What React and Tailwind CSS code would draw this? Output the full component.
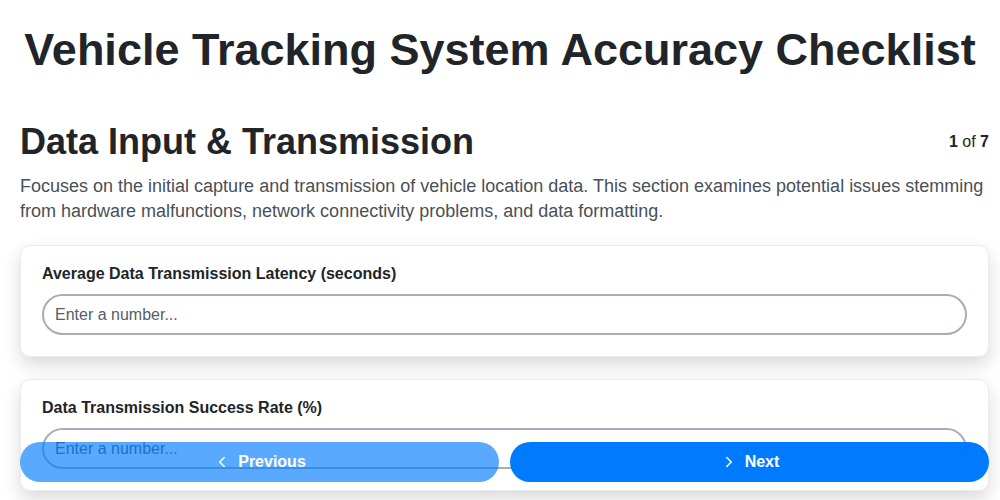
import { ChevronLeft, ChevronRight } from 'lucide-react'

const QUESTIONS = [
  { id: 'latency', label: 'Average Data Transmission Latency (seconds)' },
  { id: 'success', label: 'Data Transmission Success Rate (%)' },
]

function QuestionCard({ label }) {
  return (
    <div className="rounded-[10px] border border-[#e9ebef] bg-white px-[21px] pb-[21px] pt-[18px] shadow-[0_8px_18px_rgba(0,0,0,0.15)]">
      <label className="mb-[10px] block text-[16px] font-bold leading-[20px] text-[#212529]">{label}</label>
      <input
        type="text"
        placeholder="Enter a number..."
        className="h-[41px] w-full rounded-full border-2 border-[#a5aeb8] bg-white px-[11px] text-[16px] text-[#212529] outline-none placeholder:text-[#555d66]"
      />
    </div>
  )
}

export default function App() {
  return (
    <div className="min-h-[500px] bg-white font-['Liberation_Sans',Arial,sans-serif] text-[#212529]">
      <h1 className="pt-[24px] text-center text-[45px] font-bold leading-[52px]">
        Vehicle Tracking System Accuracy Checklist
      </h1>

      <div className="pl-5 pr-[11px] pt-[44px]">
        <div className="flex items-center justify-between">
          <h2 className="text-[36px] font-bold leading-[44px]">Data Input &amp; Transmission</h2>
          <div className="text-[16px] text-[#212529]">
            <span className="font-bold">1</span> of <span className="font-bold">7</span>
          </div>
        </div>
        <p className="mt-[10px] text-[18px] leading-[25px] text-[#495057]">
          Focuses on the initial capture and transmission of vehicle location data. This section examines potential issues
          stemming from hardware malfunctions, network connectivity problems, and data formatting.
        </p>

        <div className="mt-[21px] flex flex-col gap-[22px] pb-6">
          {QUESTIONS.map((q) => (
            <QuestionCard key={q.id} label={q.label} />
          ))}
        </div>
      </div>

      <div className="fixed bottom-[18px] left-5 right-[11px] flex gap-[11px]">
        <button
          type="button"
          disabled
          className="flex h-[40px] flex-1 items-center justify-center gap-[7px] rounded-full bg-[#007bff] text-[16px] font-bold text-white opacity-65"
        >
          <ChevronLeft size={18} strokeWidth={2} />
          Previous
        </button>
        <button
          type="button"
          className="flex h-[40px] flex-1 items-center justify-center gap-[7px] rounded-full bg-[#007bff] text-[16px] font-bold text-white"
        >
          <ChevronRight size={18} strokeWidth={2} />
          Next
        </button>
      </div>
    </div>
  )
}
